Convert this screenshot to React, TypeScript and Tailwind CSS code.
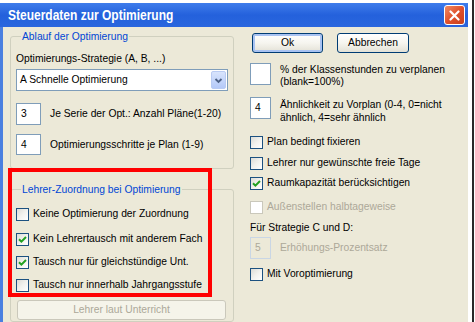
import clsx from 'clsx'

function Check({ checked, disabled }: { checked?: boolean; disabled?: boolean }) {
  return (
    <span
      className={clsx(
        'flex h-[13px] w-[13px] shrink-0 items-center justify-center border',
        disabled
          ? 'border-[#cac8bb] bg-white'
          : 'border-[#1c5180] bg-gradient-to-br from-[#dcdcd7] via-[#f2f2ee] to-white',
      )}
    >
      {checked ? (
        <svg width="9" height="9" viewBox="0 0 9 9">
          <path d="M1 4.2 L3.4 6.6 L8 2" fill="none" stroke="#21a121" strokeWidth="2" />
        </svg>
      ) : null}
    </span>
  )
}

function CheckRow({
  label,
  checked,
  disabled,
  className,
}: {
  label: string
  checked?: boolean
  disabled?: boolean
  className?: string
}) {
  return (
    <div className={clsx('flex h-[14px] items-center gap-[4px]', className)}>
      <Check checked={checked} disabled={disabled} />
      <span className={clsx('whitespace-nowrap', disabled ? 'text-[#aca899]' : 'text-black')}>{label}</span>
    </div>
  )
}

function Field({ value, disabled, className }: { value?: string; disabled?: boolean; className?: string }) {
  return (
    <div
      className={clsx(
        'flex shrink-0 items-center border pl-[4px]',
        disabled ? 'border-[#c9d6e5] bg-[#ece9d8] text-[#aca899]' : 'border-[#7f9db9] bg-white text-black',
        className,
      )}
    >
      {value}
    </div>
  )
}

function XpButton({ label, primary, className }: { label: string; primary?: boolean; className?: string }) {
  return (
    <div
      className={clsx(
        'flex h-[20px] items-center justify-center rounded-[3px] border border-[#003c74] bg-gradient-to-b from-white via-[#f6f5ef] to-[#e3e1d6] text-black',
        primary && 'shadow-[inset_0_0_0_2px_#a9c3f2]',
        className,
      )}
    >
      {label}
    </div>
  )
}

export default function App() {
  return (
    <div className="relative flex h-[322px] w-[475px] overflow-hidden bg-white font-['Liberation_Sans',Arial,sans-serif] text-[10.3px] leading-[14px]">
      {/* window */}
      <div className="mt-[3px] flex w-[468px] flex-col">
        <div className="flex h-[24px] items-center justify-between bg-gradient-to-b from-[#3f7ceb] via-[#2461dc] to-[#2a66de] pl-[8px] pr-[3px]">
          {/* XP title font is narrower than anything installed */}
          <span className="inline-block origin-left scale-x-[0.8] text-[15px] font-bold whitespace-nowrap text-white">
            Steuerdaten zur Optimierung
          </span>
          <div className="flex h-[20px] w-[21px] items-center justify-center rounded-[3px] border border-white bg-gradient-to-br from-[#f08a62] via-[#e0512c] to-[#c8401e]">
            <svg width="11" height="11" viewBox="0 0 11 11">
              <path d="M1.5 1.5 L9.5 9.5 M9.5 1.5 L1.5 9.5" stroke="white" strokeWidth="2.2" strokeLinecap="round" />
            </svg>
          </div>
        </div>

        <div className="flex flex-1 border-l-[3px] border-l-[#4a7fe0] bg-[#ece9d8] pl-[7px]">
          {/* left column */}
          <div className="flex w-[224px] flex-col">
            <fieldset className="mt-[3px] rounded-[3px] border border-[#d0d0bf] px-[5px] pb-[13px] pt-[9px]">
              <legend className="ml-[5px] px-[1px] leading-[13px] text-[#0046d5]">Ablauf der Optimierung</legend>
              <div className="h-[14px]">Optimierungs-Strategie (A, B, ...)</div>
              <div className="mt-[3px] flex h-[22px] w-[212px] items-center justify-between border border-[#7f9db9] bg-white pl-[3px] pr-[1px]">
                <span>A Schnelle Optimierung</span>
                <div className="flex h-[18px] w-[15px] items-center justify-center rounded-[2px] border border-[#b9cbf3] bg-gradient-to-b from-[#d8e4fc] to-[#b4c9f8]">
                  <svg width="9" height="7" viewBox="0 0 9 7">
                    <path d="M1.5 2 L4.5 5 L7.5 2" fill="none" stroke="#4d6185" strokeWidth="1.8" />
                  </svg>
                </div>
              </div>
              <div className="mt-[12px] flex h-[22px] items-center gap-[9px]">
                <Field value="3" className="h-[22px] w-[25px]" />
                <span className="whitespace-nowrap">Je Serie der Opt.: Anzahl Pläne(1-20)</span>
              </div>
              <div className="mt-[9px] flex h-[21px] items-center gap-[9px]">
                <Field value="4" className="h-[21px] w-[25px]" />
                <span className="whitespace-nowrap">Optimierungsschritte je Plan (1-9)</span>
              </div>
            </fieldset>

            <fieldset className="mt-[14px] rounded-[3px] border border-[#d0d0bf] px-[5px] pb-[1px] pt-[11px]">
              <legend className="ml-[5px] px-[1px] leading-[13px] text-[#0046d5]">Lehrer-Zuordnung bei Optimierung</legend>
              <CheckRow label="Keine Optimierung der Zuordnung" />
              <CheckRow label="Kein Lehrertausch mit anderem Fach" checked className="mt-[11px]" />
              <CheckRow label="Tausch nur für gleichstündige Unt." checked className="mt-[9px]" />
              <CheckRow label="Tausch nur innerhalb Jahrgangsstufe" className="mt-[9px]" />
              <div className="ml-[1px] mt-[8px] flex h-[20px] w-[209px] items-center justify-center rounded-[3px] border border-[#cac8bb] bg-[#f5f4ea] text-[#aca899]">
                Lehrer laut Unterricht
              </div>
            </fieldset>
          </div>

          {/* right column */}
          <div className="ml-[16px] flex flex-col">
            <div className="mt-[6px] flex">
              <XpButton label="Ok" primary className="ml-[2px] w-[71px]" />
              <XpButton label="Abbrechen" className="ml-[14px] w-[72px]" />
            </div>
            <div className="mt-[10px] flex h-[22px] items-start gap-[9px]">
              <Field className="h-[22px] w-[21px]" />
              <div className="pt-[1px] leading-[12px]">
                <div className="whitespace-nowrap">% der Klassenstunden zu verplanen</div>
                <div>(blank=100%)</div>
              </div>
            </div>
            <div className="mt-[12px] flex h-[22px] items-start gap-[9px]">
              <Field value="4" className="h-[22px] w-[21px]" />
              <div className="pt-[1px] leading-[13px]">
                <div className="whitespace-nowrap">Ähnlichkeit zu Vorplan (0-4, 0=nicht</div>
                <div className="whitespace-nowrap">ähnlich, 4=sehr ähnlich</div>
              </div>
            </div>
            <CheckRow label="Plan bedingt fixieren" className="mt-[16px]" />
            <CheckRow label="Lehrer nur gewünschte freie Tage" className="mt-[7px]" />
            <CheckRow label="Raumkapazität berücksichtigen" checked className="mt-[6px]" />
            <CheckRow label="Außenstellen halbtageweise" disabled className="mt-[10px]" />
            <div className="mt-[7px] h-[14px]">Für Strategie C und D:</div>
            <div className="mt-[2px] flex h-[22px] items-center gap-[9px]">
              <Field value="5" disabled className="h-[22px] w-[21px]" />
              <span className="text-[#aca899]">Erhöhungs-Prozentsatz</span>
            </div>
            <CheckRow label="Mit Voroptimierung" className="mt-[8px]" />
          </div>
        </div>
      </div>

      {/* frame edge on the right */}
      <div className="ml-[4px] w-[2px] bg-[#2a2a2a]" />

      {/* red annotation frame */}
      <div className="absolute left-[8px] top-[168px] h-[129px] w-[204px] border-4 border-[#ff0000]" />
    </div>
  )
}
